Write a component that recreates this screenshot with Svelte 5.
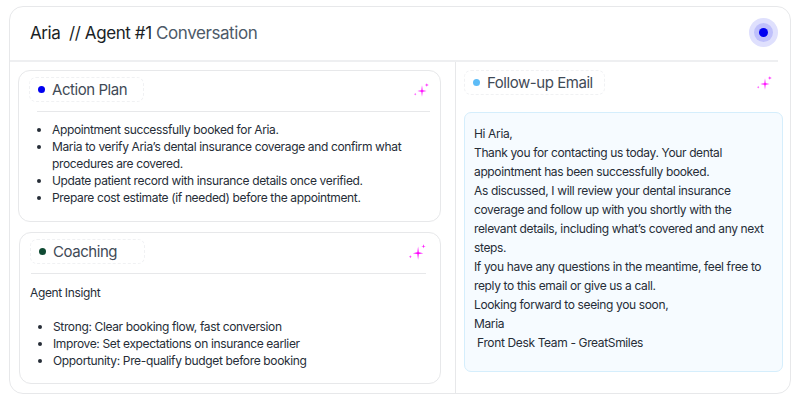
<script>
  const plan = [
    'Appointment successfully booked for Aria.',
    'Maria to verify Aria’s dental insurance coverage and confirm what procedures are covered.',
    'Update patient record with insurance details once verified.',
    'Prepare cost estimate (if needed) before the appointment.'
  ];
  const coaching = [
    'Strong: Clear booking flow, fast conversion',
    'Improve: Set expectations on insurance earlier',
    'Opportunity: Pre-qualify budget before booking'
  ];
  const email = [
    'Hi Aria,',
    'Thank you for contacting us today. Your dental appointment has been successfully booked.',
    'As discussed, I will review your dental insurance coverage and follow up with you shortly with the relevant details, including what’s covered and any next steps.',
    'If you have any questions in the meantime, feel free to reply to this email or give us a call.',
    'Looking forward to seeing you soon,',
    'Maria',
    '\u00a0Front Desk Team - GreatSmiles'
  ];
</script>

{#snippet sparkle()}
  <svg class="sparkle" viewBox="0 0 15 14" aria-hidden="true">
    <path d="M8 2.2 L8.6 7.2 L12.6 8 L8.6 8.8 L8 13.8 L7.4 8.8 L3.4 8 L7.4 7.2 Z" fill="#f0f"/>
    <path d="M12.8 .2 L13.3 1.6 L14.8 2 L13.3 2.4 L12.8 3.8 L12.3 2.4 L10.8 2 L12.3 1.6 Z" fill="#f0f" opacity=".85"/>
    <path d="M1.2 9.9 L1.6 10.8 L2.4 11.2 L1.6 11.6 L1.2 12.5 L.8 11.6 L0 11.2 L.8 10.8 Z" fill="#f0f" opacity=".75"/>
  </svg>
{/snippet}

<div class="page">
  <main class="shell">
    <header class="top">
      <h1>Aria&nbsp; // Agent #1 <span>Conversation</span></h1>
      <div class="pulse"><i></i></div>
    </header>
    <div class="columns">
      <section class="left">
        <article class="card plan">
          <div class="head">
            <div class="pill"><b class="dot blue"></b>Action Plan</div>
            {@render sparkle()}
          </div>
          <ul>
            {#each plan as item}<li>{item}</li>{/each}
          </ul>
        </article>
        <article class="card coach">
          <div class="head">
            <div class="pill"><b class="dot green"></b>Coaching</div>
            {@render sparkle()}
          </div>
          <p>Agent Insight</p>
          <ul>
            {#each coaching as item}<li>{item}</li>{/each}
          </ul>
        </article>
      </section>
      <section class="right">
        <div class="head email-head">
          <div class="pill"><b class="dot sky"></b>Follow-up Email</div>
          {@render sparkle()}
        </div>
        <div class="email">
          {#each email as line}<div>{line}</div>{/each}
        </div>
      </section>
    </div>
  </main>
</div>

<style>
  :global(body) {
    margin: 0;
    background: #fff;
    font-family: Inter, "Liberation Sans", sans-serif;
  }
  .page {
    width: 800px;
    height: 400px;
    box-sizing: border-box;
    padding: 6px 9px;
  }
  .shell {
    box-sizing: border-box;
    height: 388px;
    border: 1px solid #e7e8ea;
    border-radius: 14px;
    display: flex;
    flex-direction: column;
    background: #fff;
  }
  .top {
    box-sizing: border-box;
    height: 55px;
    margin-right: 12px;
    padding: 0 0 2px 20px;
    border-bottom: 2px solid #eeeff1;
    display: flex;
    align-items: center;
    justify-content: space-between;
    flex: none;
  }
  h1 {
    margin: 0;
    font-size: 17px;
    font-weight: 400;
    letter-spacing: -0.42px;
    color: #1b1f26;
  }
  h1 span { color: #4d5a68; }
  .pulse {
    width: 29px;
    height: 29px;
    border-radius: 50%;
    background: #dfe0fd;
    display: grid;
    place-items: center;
    position: relative;
  }
  .pulse::before {
    content: "";
    position: absolute;
    left: 5px;
    top: 5px;
    width: 19px;
    height: 19px;
    border-radius: 50%;
    background: #bfc0fb;
  }
  .pulse i {
    position: relative;
    width: 9px;
    height: 9px;
    border-radius: 50%;
    background: #0000f0;
  }
  .columns {
    flex: 1;
    display: flex;
    min-height: 0;
  }
  .left {
    width: 446px;
    box-sizing: border-box;
    padding: 8px 14px 0 8px;
    border-right: 1px solid #e7e8ea;
    display: flex;
    flex-direction: column;
    gap: 10px;
    flex: none;
  }
  .card {
    box-sizing: border-box;
    height: 152px;
    border: 1px solid #e7e8ea;
    border-radius: 12px;
    padding: 6px 10px 0;
  }
  .coach {
    margin-left: 1px;
    padding-right: 14px;
  }
  .head {
    display: flex;
    align-items: center;
    justify-content: space-between;
  }
  .card .head {
    padding-bottom: 9px;
    border-bottom: 1px solid #e7e8ea;
  }
  .plan .head { margin-left: 8px; }
  .plan .pill { margin-left: -8px; }
  .plan .sparkle { margin-right: 1px; }
  .coach .head { margin-left: 1px; }
  .coach .pill { margin-left: -1px; }
  .pill {
    box-sizing: border-box;
    width: 115px;
    height: 25px;
    border: 1px dashed #f0f1f3;
    border-radius: 7px;
    display: flex;
    align-items: center;
    gap: 7px;
    padding-left: 8px;
    font-size: 15px;
    letter-spacing: -0.45px;
    color: #3f4a56;
  }
  .dot {
    width: 7px;
    height: 7px;
    border-radius: 50%;
    flex: none;
  }
  .blue { background: #0000f0; }
  .green { background: #0f4a33; }
  .sky { background: #5dbcf7; }
  .sparkle {
    flex: none;
    width: 15px;
    height: 14px;
  }
  .coach .sparkle {
    width: 17px;
    height: 16px;
  }
  ul {
    margin: 9px 0 0;
    padding: 0 0 0 23px;
    font-size: 12px;
    line-height: 17px;
    letter-spacing: -0.36px;
    color: #262d37;
  }
  p {
    margin: 10px 0 17px;
    font-size: 12px;
    line-height: 17px;
    letter-spacing: -0.36px;
    color: #262d37;
  }
  .right {
    flex: 1;
    box-sizing: border-box;
    padding: 8px 7px 0 8px;
    min-width: 0;
  }
  .email-head .pill { width: 141px; }
  .email-head { padding-right: 11px; }
  .email {
    box-sizing: border-box;
    height: 260px;
    margin-top: 17px;
    border: 1px solid #d5eefc;
    border-radius: 7px;
    background: #f6fbff;
    padding: 11px 9px;
    font-size: 12px;
    line-height: 19px;
    letter-spacing: -0.36px;
    color: #262d37;
  }
</style>
